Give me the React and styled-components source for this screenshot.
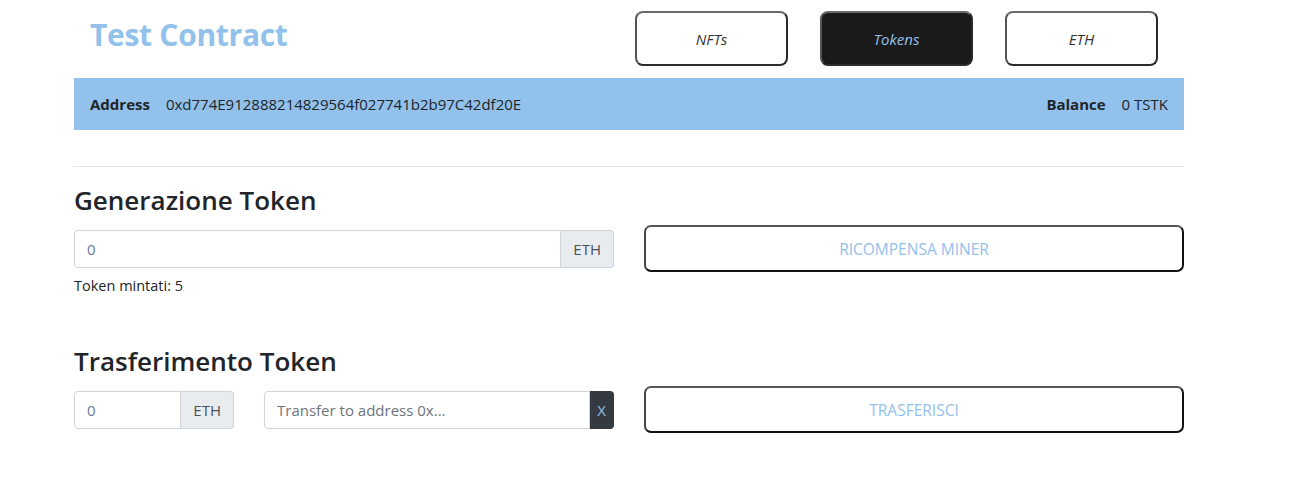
import React from 'react';
import styled, { createGlobalStyle } from 'styled-components';

const GlobalStyle = createGlobalStyle`
  body {
    margin: 0;
    background: #fff;
    font-family: "Open Sans", "Noto Sans", sans-serif;
    color: #212529;
  }
`;

const Page = styled.div`
  width: 1110px;
  margin-left: 74px;
`;

const Header = styled.header`
  display: flex;
  align-items: flex-start;
  justify-content: space-between;
  padding: 11px 26px 12px 16px;
`;

const Title = styled.h1`
  margin: 6px 0 0;
  font-size: 30px;
  line-height: 36px;
  font-weight: 700;
  color: #92c1eb;
  letter-spacing: -0.3px;
`;

const Nav = styled.nav`
  display: flex;
  gap: 32px;
`;

const NavButton = styled.button`
  width: 153px;
  height: 55px;
  border: 2px solid #2a2a2a;
  border-top-color: #6a6a6a;
  border-left-color: #555;
  border-radius: 8px;
  background: ${p => (p.$active ? '#1a1a1a' : '#fff')};
  color: ${p => (p.$active ? '#92c1eb' : '#333')};
  font-family: inherit;
  font-style: italic;
  font-size: 15px;
  cursor: pointer;
`;

const InfoBar = styled.div`
  display: flex;
  align-items: center;
  justify-content: space-between;
  height: 52px;
  padding: 0 16px;
  background: #92c1eb;
  font-size: 15px;
`;

const Info = styled.div`
  display: flex;
  gap: 16px;
`;

const Label = styled.span`
  font-weight: 700;
`;

const Divider = styled.hr`
  margin: 36px 0 16px;
  border: 0;
  border-top: 1px solid #e3e5e7;
`;

const Section = styled.section`
  margin-bottom: 49px;
`;

const Heading = styled.h3`
  margin: 0 0 8px;
  font-size: 26px;
  font-weight: 600;
  line-height: 34px;
`;

const Row = styled.div`
  display: grid;
  grid-template-columns: 1fr 1fr;
  column-gap: 30px;
  align-items: start;
`;

const Fields = styled.div`
  display: grid;
  grid-template-columns: ${p => p.$cols || '1fr'};
  column-gap: 30px;
  padding-top: 5px;
`;

const InputGroup = styled.div`
  display: flex;
  height: 38px;
`;

const Input = styled.input`
  flex: 1;
  min-width: 0;
  padding: 0 12px;
  border: 1px solid #ced4da;
  border-radius: 4px 0 0 4px;
  font-family: inherit;
  font-size: 15px;
  color: #6c7a9c;
  &::placeholder {
    color: #6c757d;
  }
`;

const Addon = styled.span`
  display: flex;
  align-items: center;
  border: 1px solid ${p => (p.$dark ? '#343a40' : '#ced4da')};
  border-left: 0;
  border-radius: 0 4px 4px 0;
  background: ${p => (p.$dark ? '#343a40' : '#e9ecef')};
  color: ${p => (p.$dark ? '#92c1eb' : '#495057')};
  padding: ${p => (p.$dark ? '0 7px' : '0 12px')};
  font-size: 15px;
`;

const Note = styled.p`
  margin: 8px 0 0;
  font-size: 14.5px;
`;

const ActionButton = styled.button`
  width: 100%;
  height: 47px;
  border: 2px solid #111;
  border-top-color: #555;
  border-left-color: #444;
  border-radius: 7px;
  background: #fff;
  color: #92c1eb;
  font-family: inherit;
  font-size: 15.5px;
  text-transform: uppercase;
  cursor: pointer;
`;

export default function App() {
  return (
    <Page>
      <GlobalStyle />
      <Header>
        <Title>Test Contract</Title>
        <Nav>
          <NavButton>NFTs</NavButton>
          <NavButton $active>Tokens</NavButton>
          <NavButton>ETH</NavButton>
        </Nav>
      </Header>
      <InfoBar>
        <Info>
          <Label>Address</Label>
          <span>0xd774E912888214829564f027741b2b97C42df20E</span>
        </Info>
        <Info>
          <Label>Balance</Label>
          <span>0 TSTK</span>
        </Info>
      </InfoBar>
      <Divider />

      <Section>
        <Heading>Generazione Token</Heading>
        <Row>
          <div>
            <Fields>
              <InputGroup>
                <Input defaultValue="0" />
                <Addon>ETH</Addon>
              </InputGroup>
            </Fields>
            <Note>Token mintati: 5</Note>
          </div>
          <ActionButton>Ricompensa miner</ActionButton>
        </Row>
      </Section>

      <Section>
        <Heading>Trasferimento Token</Heading>
        <Row>
          <Fields $cols="160px 1fr">
            <InputGroup>
              <Input defaultValue="0" />
              <Addon>ETH</Addon>
            </InputGroup>
            <InputGroup>
              <Input placeholder="Transfer to address 0x..." />
              <Addon $dark>X</Addon>
            </InputGroup>
          </Fields>
          <ActionButton>Trasferisci</ActionButton>
        </Row>
      </Section>
    </Page>
  );
}
